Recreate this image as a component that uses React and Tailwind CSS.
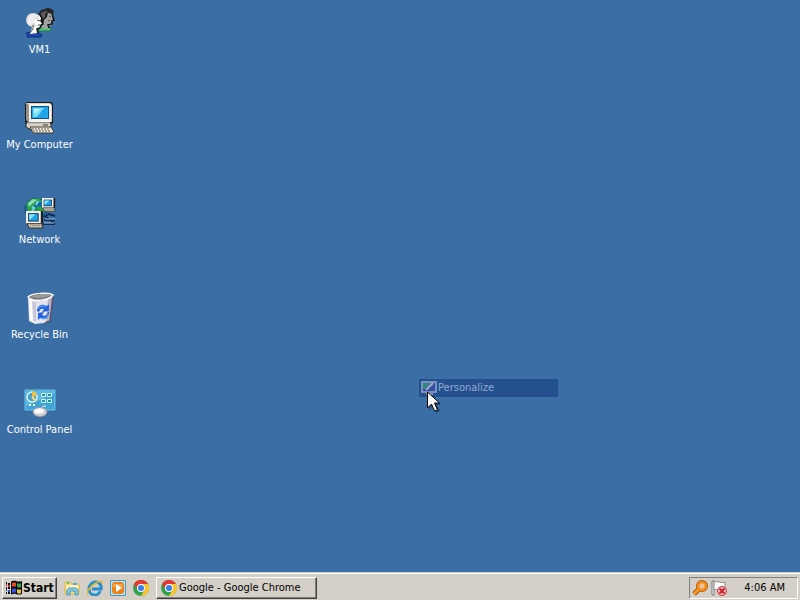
function VmIcon() {
  return (
    <svg width="32" height="32" viewBox="0 0 32 32" aria-hidden="true">
      {/* Back head */}
      <path d="M15 21c3-1 6 0 9-1l3 1-1 3H15z" fill="#4fc46c" stroke="#1f7d4c" />
      <path d="M15 8l3-4 9 1 2 4-1 2 2 3-2 1-1 4h-3l1 3-7-1z" fill="#a3a3a3" />
      <path d="M28 6l1 4 1 3-2 1v3l-4 1 1 3" fill="none" stroke="#151515" strokeWidth="1.5" />
      <path d="M14 8c1-3 3-6 7-6 2-2 6-1 9 2l-1 3-5-1-1 4-3 3v3l-5-3z" fill="#262626" />
      <path d="M17 6l4-2 3 1-3 2v3l-3 2z" fill="#5d5d5d" />
      <path d="M25 9l2 1M24 13l2 1" stroke="#555" />
      {/* Front head */}
      <path d="M3 25l5 2 7-1 3 2-1 2H3z" fill="#2444ad" stroke="#102c83" />
      <path d="M6 10l9-2 3 3-1 3 2 3-2 1v3l-4 1 1 4-8 1 2-6z" fill="#fff" />
      <circle cx="9" cy="13" r="7" fill="#d5d5d5" />
      <path d="M4 10c2-4 8-4 11-1l-4 2-1 5-4 3-3-4z" fill="#eee" />
      <path d="M10 14c1-2 3-3 6-3l1 3-2 5-3 1z" fill="#fff" />
      <path d="M16 8l2 3-1 3 2 3-2 1-1 3-3 1 1 4" fill="none" stroke="#111" strokeWidth="1.5" />
      <path d="M9 18v4l-3 4M13 13l3 1M14 18h2" fill="none" stroke="#555" />
    </svg>
  );
}

function ComputerIcon() {
  return (
    <svg width="32" height="32" viewBox="0 0 32 32" aria-hidden="true">
      <path d="M3 0h24l2 2v19l-3 2H4l-3-3V2z" fill="#171717" />
      <path d="M2 1h24l2 2v17H5l-3-2z" fill="#d8d5cc" />
      <path d="M2 1l3 2v17l-3-2z" fill="#989489" />
      <path d="M5 2h22v18H5z" fill="#f7f4ec" />
      <path d="M7 4h18v13H7z" fill="#174e8e" />
      <path d="M8 5h16v11H8z" fill="#1fa6ed" />
      <path d="M9 6h11l-7 9H9z" fill="#79dbfa" />
      <path d="M10 7h6l-5 5z" fill="#b6f3ff" />
      <path d="M2 21h25v6H5l-3-2z" fill="#d8d3c3" stroke="#252525" />
      <path d="M3 21h23" stroke="#fff" />
      <path d="M19 23h5" stroke="#333" />
      <path d="M6 25h21l3 5-2 1H9z" fill="#eee9dc" stroke="#403b31" />
      <path d="M8 27h18M9 29h18" stroke="#625d53" strokeDasharray="2 1" />
    </svg>
  );
}

function SmallMonitor({ x, y, size }) {
  return (
    <svg x={x} y={y} width={size} height={size} viewBox="0 0 17 17">
      <path d="M1 0h15v12H1z" fill="#1b1b1b" />
      <path d="M0 0h14v12H0z" fill="#f1eee5" />
      <path d="M2 2h10v8H2z" fill="#153a70" />
      <path d="M3 3h8v6H3z" fill="#1ba3e8" />
      <path d="M3 3h6L4 8H3z" fill="#8be5ff" />
      <path d="M1 12h14l1 4H3z" fill="#d7cfbc" stroke="#38342d" />
      <path d="M4 14h11" stroke="#555" strokeDasharray="1 1" />
    </svg>
  );
}

function NetworkIcon() {
  return (
    <svg width="32" height="32" viewBox="0 0 32 32" aria-hidden="true">
      <circle cx="12" cy="12" r="11" fill="#1768a8" stroke="#154d70" />
      <path d="M2 7l5-5 8-1 3 3-3 2-3-1-2 4 3 3-2 3-3-1v4l-4-3z" fill="#2ca04e" />
      <path d="M13 9l5 1 3 4-4 5-4-3z" fill="#2ca04e" />
      <path d="M4 6l5-4 4 1-4 3-4 4z" fill="#8bdfb2" />
      <path d="M8 10l2 1-2 4M14 4l-2 4" fill="none" stroke="#74d8ec" strokeWidth="2" />
      <path d="M20 20l5-3 6 2M20 23h11M19 27h12M22 20l8 6" fill="none" stroke="#122b55" strokeWidth="2" />
      <path d="M21 22h10M20 26h10" stroke="#9bc4e5" />
      <SmallMonitor x="18" y="1" size="14" />
      <SmallMonitor x="2" y="14" size="18" />
    </svg>
  );
}

function RecycleIcon() {
  return (
    <svg width="32" height="32" viewBox="0 0 32 32" aria-hidden="true">
      <path d="M4 5l8 4 17-6-3 26-6 2-9 1-6-3z" fill="#e4e2ec" />
      <path d="M5 6l6 3 1 22-6-2z" fill="#fff" />
      <path d="M8 9l4 1v20l-3-1z" fill="#c8c7da" />
      <path d="M24 6l5-3-3 26-4 1z" fill="#b9b2c5" />
      <path d="M29 4l-3 25-5 2" fill="none" stroke="#574f68" strokeWidth="1.5" />
      <path d="M4 5c3-4 22-5 25-2-3 5-20 8-25 2z" fill="#777" stroke="#f7f7f7" strokeWidth="1.5" />
      <path d="M6 5c5-3 17-4 21-2-4 2-9 3-13 3z" fill="#999b9d" />
      <path d="M13 19c0-5 5-8 10-5l2-2v7l-7 1 2-3c-3-1-4 0-5 3zM25 20c0 6-4 9-9 6l-2 2v-7l6-1-2 3c3 2 5 0 6-3z" fill="#2461e2" />
      <path d="M14 17c2-3 5-4 8-2M17 26c3 1 5 0 7-3" fill="none" stroke="#62b7ff" />
    </svg>
  );
}

function ControlIcon() {
  return (
    <svg width="32" height="32" viewBox="0 0 32 32" aria-hidden="true">
      <path d="M1 3h30v20H1z" fill="#3fa3d6" stroke="#6cc4ea" />
      <path d="M2 4h28v3L2 19z" fill="#5cb8e2" />
      <circle cx="8" cy="10" r="5" fill="#4aa0c8" stroke="#d7f3f6" strokeWidth="1.5" />
      <path d="M8 11V4a6 6 0 015 4z" fill="#efbd45" />
      <path d="M8 10l4 4" stroke="#f2de8b" strokeWidth="2" />
      <path d="M17.500 6.500h4v3h-4zM23.500 6.500h4v3h-4zM17.500 12.500h4v3h-4zM23.500 12.500h4v3h-4z" fill="#258fc1" stroke="#c9f5fd" />
      <path d="M5 18h2M9 18h2" stroke="#fff" strokeWidth="2" />
      <path d="M17 23c0-3 2-4 5-4" fill="none" stroke="#e8edf1" />
      <ellipse cx="16" cy="25" rx="7" ry="4.500" fill="#d6d0d4" stroke="#9799a5" />
      <ellipse cx="15" cy="24" rx="5" ry="2.500" fill="#fff" />
    </svg>
  );
}

function ChromeIcon() {
  return (
    <svg width="16" height="16" viewBox="0 0 16 16" className="shrink-0" aria-hidden="true">
      <circle cx="8" cy="8" r="8" fill="#35a24b" />
      <path d="M1 4a8 8 0 0114 0H8a4 4 0 00-4 5z" fill="#e6392f" />
      <path d="M15 4a8 8 0 01-7 12l4-7a4 4 0 00-4-5z" fill="#f9c62e" />
      <circle cx="8" cy="8" r="4" fill="#fff" />
      <circle cx="8" cy="8" r="3" fill="#397ee8" />
    </svg>
  );
}

function FolderIcon() {
  return (
    <svg width="16" height="16" viewBox="0 0 16 16" aria-hidden="true">
      <path d="M1 2h5l1 2h8v10H1z" fill="#f4da77" stroke="#d8b849" />
      <path d="M2 5h12v4H2z" fill="#fff2b3" />
      <path d="M3 3h2" stroke="#53bc69" strokeWidth="2" />
      <path d="M9 4h4" stroke="#56a9db" strokeWidth="2" />
      <path d="M3 15v-5l2-2h7l2 2v5h-3v-4H6v4z" fill="#80caeb" stroke="#5298be" />
    </svg>
  );
}

function ExplorerIcon() {
  return (
    <svg width="16" height="16" viewBox="0 0 16 16" aria-hidden="true">
      <path d="M13 11c-1 3-3 4-5 4-4 0-6-3-6-6 0-4 3-7 7-7 3 0 6 3 5 7H5" fill="none" stroke="#278dcc" strokeWidth="3" />
      <path d="M12 10c-1 3-3 4-5 3M4 8c0-3 3-5 6-4" fill="none" stroke="#75d4f5" />
      <path d="M1 15c-3-3 3-9 8-12 3-2 7-3 6 1" fill="none" stroke="#e6b72d" strokeWidth="1.5" />
    </svg>
  );
}

function PlayerIcon() {
  return (
    <svg width="16" height="16" viewBox="0 0 16 16" aria-hidden="true">
      <path d="M.5.5h15v15H.5z" fill="#b9dff0" stroke="#4a9bc0" />
      <rect x="2" y="2" width="12" height="12" rx="3" fill="#ec8219" />
      <path d="M3 4h10v3H3z" fill="#f5a548" />
      <path d="M6 4l6 4-6 4z" fill="#fff" />
    </svg>
  );
}

function WindowsIcon() {
  return (
    <svg width="16" height="16" viewBox="0 0 16 16" className="shrink-0" aria-hidden="true">
      <path d="M5 2c4-3 6 1 11-1v13c-5 2-7-2-11 1z" fill="#080808" />
      <path d="M6 3c2-1 3-1 4 0v4c-1-1-2-1-4 0z" fill="#e94729" />
      <path d="M11 3c2 1 3 1 4 0v4c-1 1-2 1-4 0z" fill="#399e50" />
      <path d="M6 9c2-1 3-1 4 0v4c-1-1-2-1-4 0z" fill="#3850dd" />
      <path d="M11 9c2 1 3 1 4 0v4c-1 1-2 1-4 0z" fill="#e9c635" />
      <path d="M0 3h1M2 4h2M0 8h1M2 8h2M0 13h1M2 13h2" stroke="#111" strokeWidth="2" />
      <path d="M0 5h1M2 6h2" stroke="#c63e31" strokeWidth="2" />
      <path d="M0 10h1M2 11h2" stroke="#304fc3" strokeWidth="2" />
    </svg>
  );
}

function KeyIcon() {
  return (
    <svg width="18" height="18" viewBox="0 0 18 18" aria-hidden="true">
      <path d="M8 10l-5 5" stroke="#b45507" strokeWidth="5" />
      <circle cx="11" cy="7" r="4" fill="none" stroke="#b45507" strokeWidth="4" />
      <circle cx="11" cy="7" r="4" fill="#e7c39a" stroke="#f28b16" strokeWidth="2.5" />
      <path d="M8 10l-5 5" stroke="#f8992d" strokeWidth="3" />
    </svg>
  );
}

function FlagIcon() {
  return (
    <svg width="16" height="16" viewBox="0 0 16 16" aria-hidden="true">
      <path d="M1 1h2v14H1z" fill="#fff" stroke="#777" />
      <path d="M3 2c4-2 6 2 11 0v8c-5 2-7-2-11 0z" fill="#fff" stroke="#888" />
      <circle cx="11" cy="11" r="4.5" fill="#f6c5c5" stroke="#c92d37" />
      <path d="M8.5 8.500l5 5M13.500 8.500l-5 5" stroke="#d01f2d" strokeWidth="2" />
    </svg>
  );
}

function PersonalizeIcon() {
  return (
    <svg width="16" height="16" viewBox="0 0 16 16" className="shrink-0" aria-hidden="true">
      <path d="M1 2h14v10H1z" fill="#344f9f" stroke="#91a9cb" strokeWidth="1.5" />
      <path d="M2 3h8L4 9H2z" fill="#34877d" />
      <path d="M5 10l7-7" stroke="#a2add3" strokeWidth="2" />
      <path d="M5 14h7" stroke="#8096ba" strokeWidth="2" />
    </svg>
  );
}

const shortcuts = [
  { name: "VM1", Icon: VmIcon },
  { name: "My Computer", Icon: ComputerIcon },
  { name: "Network", Icon: NetworkIcon },
  { name: "Recycle Bin", Icon: RecycleIcon },
  { name: "Control Panel", Icon: ControlIcon },
];

const quickLaunch = [
  { name: "Windows Explorer", Icon: FolderIcon },
  { name: "Internet Explorer", Icon: ExplorerIcon },
  { name: "Media Player", Icon: PlayerIcon },
  { name: "Google Chrome", Icon: ChromeIcon },
];

export default function App() {
  return (
    <div className="relative flex h-screen flex-col overflow-hidden bg-[#3b6ea5] font-['DejaVu_Sans_Condensed','DejaVu_Sans',sans-serif] text-[11px] leading-[14px]">
      {/* Desktop */}
      <main className="flex-1 pt-[7px]">
        <div className="flex w-[79px] flex-col">
          {shortcuts.map(({ name, Icon }) => (
            <button key={name} className="flex h-[95px] flex-col items-center gap-1 whitespace-nowrap text-white">
              <Icon />
              <span>{name}</span>
            </button>
          ))}
        </div>
      </main>

      {/* Fading menu item */}
      <div role="menu" className="absolute left-[419px] top-[379px] w-[139px]">
        <button role="menuitem" className="flex h-[18px] w-full items-center gap-px bg-[#24508f] pl-[2px] text-[#8fabd0]">
          <PersonalizeIcon />
          Personalize
        </button>
      </div>

      {/* Mouse pointer */}
      <svg width="14" height="22" viewBox="0 0 14 22" className="absolute left-[427px] top-[391px]" aria-hidden="true">
        <path d="M2 3v16l4-4 3 7 4-2-3-6h4z" fill="#000" opacity=".3" />
        <path d="M.5 1v16l4-4 3 7 3-1-3-7h5z" fill="#fff" stroke="#000" />
      </svg>

      {/* Taskbar */}
      <footer className="flex h-7 shrink-0 items-center border-t border-[#d4d0c8] bg-[#d4d0c8] px-[2px] text-black shadow-[inset_0_1px_0_#fff]">
        <button className="mt-[2px] flex h-[22px] w-[55px] items-center gap-px border border-b-[#404040] border-l-white border-r-[#404040] border-t-white pl-[3px] text-[12px] font-bold shadow-[inset_-1px_-1px_0_#808080]">
          <WindowsIcon />
          Start
        </button>

        <nav className="mt-[2px] flex items-center gap-[7px] pl-[7px]">
          {quickLaunch.map(({ name, Icon }) => (
            <button key={name} aria-label={name}>
              <Icon />
            </button>
          ))}
        </nav>

        <button className="ml-[7px] mt-[2px] flex h-[22px] w-[161px] items-center gap-[2px] whitespace-nowrap border border-b-[#404040] border-l-white border-r-[#404040] border-t-white pl-1 shadow-[inset_-1px_-1px_0_#808080]">
          <ChromeIcon />
          Google - Google Chrome
        </button>

        {/* Notification area */}
        <div className="ml-auto mt-[2px] flex h-[22px] w-[109px] items-center border border-b-white border-l-[#808080] border-r-white border-t-[#808080] pl-px pr-3">
          <button aria-label="Security key">
            <KeyIcon />
          </button>
          <button aria-label="Action Center" className="ml-[2px]">
            <FlagIcon />
          </button>
          <time dateTime="04:06" className="ml-auto whitespace-nowrap">4:06 AM</time>
        </div>
      </footer>
    </div>
  );
}
